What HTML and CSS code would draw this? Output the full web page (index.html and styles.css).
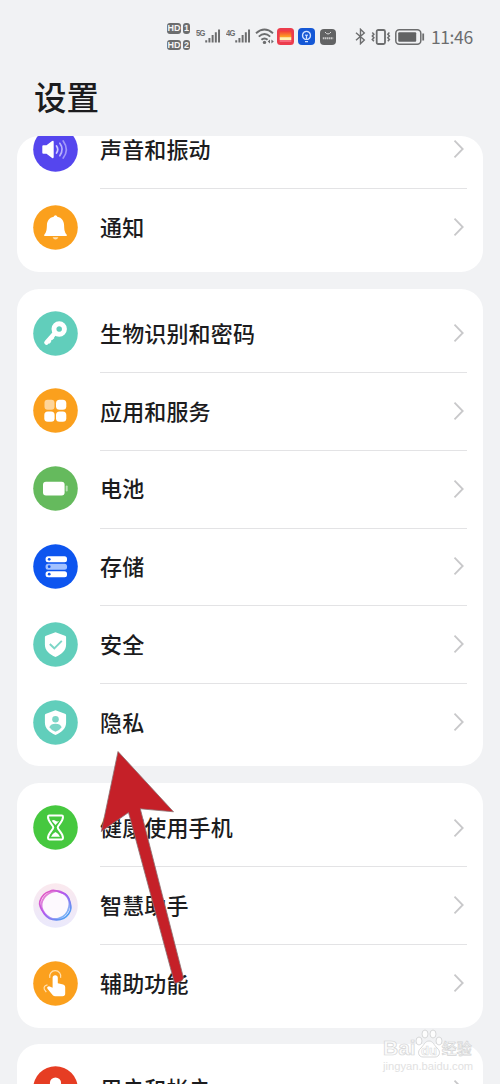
FILE: index.html
```html
<!DOCTYPE html>
<html lang="zh-CN">
<head>
<meta charset="utf-8">
<title>设置</title>
<link rel="stylesheet" href="styles.css">
</head>
<body>
<svg class="defs" aria-hidden="true">
  <defs>
    <symbol id="chev" viewBox="0 0 12 20"><path d="M1.5 1.600 9.700 10 1.5 18.400" fill="none" stroke="#c8c8ca" stroke-width="1.8"/></symbol>
    <symbol id="bars" viewBox="0 0 17 16"><path d="M1.3 12.5V15M4.7 10V15M8.1 7V15M11.5 4V15M14.9 1V15" stroke="#6c6d6e" stroke-width="2.1"/></symbol>
    <linearGradient id="sun" x1="0" y1="0" x2="0" y2="1"><stop offset="0" stop-color="#f33a3a"/><stop offset="1" stop-color="#ffb020"/></linearGradient>
    <linearGradient id="ring" x1="0" y1="0" x2="1" y2="1"><stop offset="0" stop-color="#f45bb5"/><stop offset=".45" stop-color="#b157ef"/><stop offset="1" stop-color="#37b6f5"/></linearGradient>
    <linearGradient id="halo" x1="0" y1="0" x2="0" y2="1"><stop offset="0" stop-color="#fbe9ee"/><stop offset="1" stop-color="#eae9fc"/></linearGradient>
  </defs>
</svg>
<div class="screen">
  <header class="status">
    <div class="sims">
      <div class="sim"><span class="hd">HD</span><span class="num">1</span></div>
      <div class="sim"><span class="hd">HD</span><span class="num">2</span></div>
    </div>
    <div class="signal first"><span class="net">5G</span><svg class="bars"><use href="#bars"/></svg></div>
    <div class="signal second"><span class="net">4G</span><svg class="bars"><use href="#bars"/></svg></div>
    <svg class="wifi" viewBox="0 0 20 17"><g fill="none" stroke="#6c6d6e" stroke-width="1.9"><path d="M1 5.2Q9.5-2.2 18 5.2M3.8 8.6Q9.5 3.6 15.2 8.6M6.4 11.8Q9.5 9 12.6 11.8"/></g><circle cx="9.5" cy="14.4" r="1.7" fill="#6c6d6e"/><path d="M12.7 13.5 15 11.4V15.6ZM18.8 13.5 16.4 11.4V15.6Z" fill="#6c6d6e"/></svg>
    <svg class="app red" viewBox="0 0 17 17"><rect width="17" height="17" rx="3.5" fill="#ec3c4c"/><rect x="2.7" y="3" width="11.6" height="6.5" fill="url(#sun)"/><rect x="2.7" y="9.2" width="11.6" height="2.8" fill="#fff3b0"/><rect x="2.7" y="12" width="11.6" height="2" fill="#f7687a"/></svg>
    <svg class="app blue" viewBox="0 0 17 17"><rect width="17" height="17" rx="4" fill="#1558d6"/><g fill="none" stroke="#cfe0ff" stroke-width="1.3"><path d="M6.8 11.3C3 9 4.3 3.3 8.5 3.3S14 9 10.2 11.3ZM7 13.7h3M8.5 11V7.8L7.3 6.7M8.5 7.8 9.7 6.7"/></g></svg>
    <svg class="app dark" viewBox="0 0 16 16"><rect width="16" height="16" rx="4" fill="#626364"/><path d="M5 3q3 4 6 0" fill="none" stroke="#ddd"/><path d="M2.8 9.2h10.4" stroke="#c9c9c9" stroke-width="2" stroke-dasharray="1.5 .5"/></svg>
    <svg class="bt" viewBox="0 0 11 17"><path d="M1 4.7 9.3 12 5.5 15.7V1.3L9.3 5 1 12.3" fill="none" stroke="#6c6d6e" stroke-width="1.4"/></svg>
    <svg class="vib" viewBox="0 0 20 16"><rect x="5.7" y="1" width="8.3" height="14" rx="1.5" fill="none" stroke="#6c6d6e" stroke-width="1.8"/><path d="M1.3 3.5 2.9 5.2 1.3 7 2.9 8.8 1.3 10.5 2.9 12.3M18.4 3.5 16.8 5.2 18.4 7 16.8 8.8 18.4 10.5 16.8 12.3" fill="none" stroke="#6c6d6e" stroke-width="1.5"/></svg>
    <svg class="bat" viewBox="0 0 30 16"><rect x=".8" y=".8" width="25" height="14.4" rx="3.5" fill="none" stroke="#6c6d6e" stroke-width="1.5"/><rect x="3.2" y="3.2" width="18" height="9.6" rx="1" fill="#626364"/><path d="M28.2 4.5v7" stroke="#6c6d6e" stroke-width="1.8"/></svg>
    <span class="time">11:46</span>
  </header>
  <h1 class="title">设置</h1>
  <main class="list">
    <section class="card clipped">
      <div class="row"><svg class="icon" viewBox="0 0 45 45"><circle cx="22.5" cy="22.5" r="22.3" fill="#5546ee"/><path d="M9.3 19.3q0-1 1-1h3.2l5.6-4.2q1.6-1 1.6.8v15.2q0 1.8-1.6.8l-5.6-4.2h-3.2q-1 0-1-1z" fill="#fff"/><g fill="none" stroke-width="1.7" stroke-linecap="round"><path d="M23.5 19q2.5 3.5 0 7" stroke="#cfcaff"/><path d="M26.8 16.3q4.6 6.2 0 12.4" stroke="#b8b1fb"/><path d="M30.2 13.9q6.2 8.6 0 17.2" stroke="#a198f8"/></g></svg><div class="cell"><span>声音和振动</span><svg class="chev"><use href="#chev"/></svg></div></div>
      <div class="row"><svg class="icon" viewBox="0 0 45 45"><circle cx="22.5" cy="22.5" r="22.3" fill="#fba01d"/><path d="M22.5 10.2q1.5 0 1.8 1.6c4.6.9 6.6 4.2 6.8 8.4.1 5.2.7 7.2 2.5 9.2q1 1.6-.6 1.6H12q-1.600 0-.6-1.6c1.800-2 2.400-4 2.500-9.200.2-4.200 2.200-7.500 6.800-8.400q.3-1.600 1.800-1.600z" fill="#fff"/><path d="M19.600 32.200h5.800q-1 2.300-2.900 2.300t-2.900-2.300z" fill="#ffe0b0"/></svg><div class="cell"><span>通知</span><svg class="chev"><use href="#chev"/></svg></div></div>
    </section>
    <section class="card">
      <div class="row"><svg class="icon" viewBox="0 0 45 45"><circle cx="22.500" cy="22.500" r="22.300" fill="#61cebb"/><path d="M21.500 22.500 13.500 31.500" stroke="#fff" stroke-width="4.600" stroke-linecap="round"/><path d="M15 29.500 17.300 31.800M18.500 26 20.300 28" stroke="#fff" stroke-width="3"/><circle cx="26.200" cy="18" r="5.200" fill="#9fe2d7" stroke="#fff" stroke-width="5"/><circle cx="26.200" cy="18" r="2.600" fill="#61cebb"/></svg><div class="cell"><span>生物识别和密码</span><svg class="chev"><use href="#chev"/></svg></div></div>
      <div class="row"><svg class="icon" viewBox="0 0 45 45"><circle cx="22.500" cy="22.500" r="22.300" fill="#fba01d"/><rect x="11.500" y="11.700" width="10" height="10" rx="3" fill="#fed59a"/><g fill="#fff"><rect x="23" y="11.700" width="10.300" height="10" rx="3.500"/><rect x="11.300" y="23.500" width="10.300" height="10.200" rx="3.500"/><rect x="23" y="23.500" width="10.300" height="10.200" rx="3.500"/></g></svg><div class="cell"><span>应用和服务</span><svg class="chev"><use href="#chev"/></svg></div></div>
      <div class="row"><svg class="icon" viewBox="0 0 45 45"><circle cx="22.500" cy="22.500" r="22.300" fill="#65ba5d"/><rect x="10" y="15.700" width="21.600" height="13.800" rx="3" fill="#fff"/><rect x="32.700" y="19.500" width="2" height="6" rx="1" fill="#b7dfb3"/></svg><div class="cell"><span>电池</span><svg class="chev"><use href="#chev"/></svg></div></div>
      <div class="row"><svg class="icon" viewBox="0 0 45 45"><circle cx="22.500" cy="22.500" r="22.300" fill="#0d55ef"/><rect x="12.600" y="12.300" width="21.400" height="6" rx="2.500" fill="#fff"/><rect x="12.600" y="19.700" width="21.400" height="6" rx="2.500" fill="#a3c2ff"/><rect x="12.600" y="27.200" width="21.400" height="6" rx="2.500" fill="#fff"/><g fill="#0d55ef"><circle cx="16.200" cy="15.300" r="1.400"/><circle cx="16.200" cy="22.700" r="1.400"/><circle cx="16.200" cy="30.200" r="1.400"/></g></svg><div class="cell"><span>存储</span><svg class="chev"><use href="#chev"/></svg></div></div>
      <div class="row"><svg class="icon" viewBox="0 0 45 45"><circle cx="22.500" cy="22.500" r="22.300" fill="#61cebb"/><path d="M22.500 10.200 32 13.700q1.100.4 1.100 1.500v7.300c0 6.200-4.600 9.900-10.600 12.500-6-2.600-10.600-6.300-10.600-12.500v-7.300q0-1.100 1.100-1.500z" fill="#fff"/><path d="M16.800 22 21.300 26.300 28.800 18.800" fill="none" stroke="#7cd6c7" stroke-width="1.900"/></svg><div class="cell"><span>安全</span><svg class="chev"><use href="#chev"/></svg></div></div>
      <div class="row"><svg class="icon" viewBox="0 0 45 45"><circle cx="22.500" cy="22.500" r="22.300" fill="#61cebb"/><path d="M22.500 10.200 32 13.700q1.100.4 1.100 1.500v7.300c0 6.200-4.600 9.900-10.600 12.500-6-2.600-10.600-6.300-10.600-12.500v-7.300q0-1.100 1.100-1.500z" fill="#fff"/><circle cx="22.500" cy="19.300" r="3.300" fill="#7cd6c7"/><path d="M16.300 27.200q1.500-3.400 6.200-3.400t6.200 3.400q-2.300 3.200-6.200 4.600-3.900-1.400-6.200-4.600z" fill="#7cd6c7"/></svg><div class="cell"><span>隐私</span><svg class="chev"><use href="#chev"/></svg></div></div>
    </section>
    <section class="card">
      <div class="row"><svg class="icon" viewBox="0 0 45 45"><circle cx="22.500" cy="22.500" r="22.300" fill="#46c83f"/><g fill="none" stroke="#fff" stroke-width="2" stroke-linejoin="round"><path d="M16.200 10.600h12.600q1.200 0 1.200 1.400c0 5-5.300 8-5.300 10.500s5.300 5.500 5.300 10.500q0 1.400-1.200 1.400H16.200q-1.200 0-1.200-1.400c0-5 5.300-8 5.300-10.500s-5.300-5.500-5.300-10.500q0-1.400 1.200-1.400z"/></g><path d="M18.700 15.800q1.900-1.400 3.800 0t3.800 0l-3.800 4.200zM18 31.800q1.300-3.200 4.500-4.700 3.200 1.500 4.500 4.700z" fill="#fff"/></svg><div class="cell"><span>健康使用手机</span><svg class="chev"><use href="#chev"/></svg></div></div>
      <div class="row"><svg class="icon" viewBox="0 0 45 45"><circle cx="22.500" cy="22.500" r="22.300" fill="url(#halo)"/><path d="M17 8.200c4-2.500 8.500.5 12.600 1.700 4.500 1.300 6.300 4.500 7.400 9.300 1.100 4.500 1.700 7.300-1.300 11.500-3.100 4.500-6.500 6.100-11.900 6.200-5.400.2-9.300-1.700-12.400-5.900-3.200-4.400-5.800-8.400-4.500-12.700C8.300 13.500 12 9.500 17 8.200z" fill="#fdf9fe" stroke="url(#ring)" stroke-width="1.700"/><path d="M19 8.900c5-2 10-.4 13.700 3.100 3.700 3.600 4.400 7.300 3.400 12-1 4.900-4.700 9.900-10 11.500-5.400 1.600-10.700-.9-14.100-4.700-3.500-4-4.600-8.200-2.700-12.900 1.700-4.200 5.200-7.300 9.700-9z" fill="none" stroke="url(#ring)" stroke-width="1.900" opacity=".75"/></svg><div class="cell"><span>智慧助手</span><svg class="chev"><use href="#chev"/></svg></div></div>
      <div class="row"><svg class="icon" viewBox="0 0 45 45"><circle cx="22.500" cy="22.500" r="22.300" fill="#fba01d"/><path d="M22.200 14.300c1.600 0 2.600 1 2.600 2.500v5.500l5.400 1.300q2 .5 2 2.500v6.400q0 2.700-2.700 2.700h-7.200q-1.500 0-2.500-1l-5.300-6.500q-1-1.200.2-2 1.300-.7 2.600.1l2.300 1V16.800c0-1.500 1-2.500 2.600-2.500z" fill="#fff"/><g fill="none" stroke="#ffe0b0" stroke-width="1.200"><path d="M16.800 16.800a5.600 5.600 0 1 1 10.800 0"/><path d="M14.500 23.800q-4.200 1-3.200 4.500l2 2.800"/></g></svg><div class="cell"><span>辅助功能</span><svg class="chev"><use href="#chev"/></svg></div></div>
    </section>
    <section class="card">
      <div class="row"><svg class="icon" viewBox="0 0 45 45"><circle cx="22.500" cy="22.500" r="22.300" fill="#e63d23"/><circle cx="22.500" cy="17" r="5.600" fill="#fff"/><path d="M11 32q3-8 11.500-8T34 32z" fill="#fff"/></svg><div class="cell"><span>用户和帐户</span><svg class="chev"><use href="#chev"/></svg></div></div>
    </section>
  </main>
  <svg class="arrow" viewBox="0 0 76 238"><path d="M18 1.500 73.500 61.800 40.300 58.800 83.500 228Q83 231 78 232.500T74.500 233L28.500 62.500 1.300 81.500z" fill="#c52028" stroke="#8c7274" stroke-width=".8"/></svg>
  <div class="watermark">
    <div class="brand"><span>Bai</span><svg class="paw" viewBox="0 0 28 30"><g fill="#fff" stroke="#d5d6d7" stroke-width="1"><ellipse cx="4" cy="12" rx="3" ry="4"/><ellipse cx="10" cy="5" rx="3" ry="4"/><ellipse cx="18" cy="5" rx="3" ry="4"/><ellipse cx="24" cy="12" rx="3" ry="4"/><path d="M14 12c4 0 5 4 8 7 4 3 3 9-2 9H8c-5 0-6-6-2-9 3-3 4-7 8-7z"/></g><text x="14" y="26" text-anchor="middle" class="du">du</text></svg><span class="exp">经验</span></div>
    <div class="url">jingyan.baidu.com</div>
  </div>
</div>
</body>
</html>
```
FILE: styles.css
```css
* { box-sizing: border-box; }
body { margin: 0; background: #f1f2f4; font-family: "Noto Sans CJK SC", sans-serif; color: #1c1c1e; }
.defs { position: absolute; width: 0; height: 0; }
.screen { position: relative; width: 500px; height: 1084px; overflow: hidden; display: flex; flex-direction: column; }
.status { height: 73px; flex: none; display: flex; align-items: center; padding-left: 167px; color: #6c6d6e; }
.status > * { flex: none; }
.sims { display: flex; flex-direction: column; gap: 6px; width: 24px; }
.sim { display: flex; gap: 2px; }
.hd, .num { height: 10.500px; background: #6c6d6e; color: #f5f5f5; border-radius: 3px; font: bold 9px/10.500px "Liberation Sans", sans-serif; text-align: center; }
.hd { width: 14px; }
.num { width: 7px; }
.signal { display: flex; width: 25px; height: 17px; }
.first { margin-left: 5px; }
.second { margin-left: 5px; }
.net { width: 9px; font: bold 9.500px/9px "Liberation Sans", sans-serif; letter-spacing: -.8px; transform: scaleX(.8); transform-origin: left; }
.bars { width: 17px; height: 16px; }
.wifi { width: 20px; height: 17px; margin-left: 4px; }
.app { width: 17px; height: 17px; }
.red { margin-left: 2px; }
.blue { margin-left: 4px; }
.dark { width: 16px; height: 16px; margin-left: 5px; }
.bt { width: 11px; height: 17px; margin-left: 19px; }
.vib { width: 20px; height: 16px; margin-left: 5px; }
.bat { width: 30px; height: 16px; margin-left: 4px; }
.time { margin-left: 6px; font: 17.500px/22px "Noto Sans CJK SC", sans-serif; letter-spacing: -.4px; }
.title { flex: none; margin: 0; height: 63px; padding-left: 34px; font-size: 32.500px; line-height: 45px; font-weight: 500; }
.list { flex: 1; min-height: 0; overflow: hidden; padding: 0 17px; display: flex; flex-direction: column; gap: 16.700px; }
.card { flex: none; background: #fff; border-radius: 22px; padding: 5.500px 16px; overflow: hidden; }
.clipped { padding-top: 0; padding-bottom: 6px; height: 136px; display: flex; flex-direction: column; justify-content: flex-end; }
.row { flex: none; height: 77.800px; display: flex; align-items: center; }
.icon { width: 45px; height: 45px; flex: none; }
.cell { flex: 1; align-self: stretch; margin-left: 22px; display: flex; align-items: center; justify-content: space-between; font-size: 22px; letter-spacing: .15px; font-weight: 500; line-height: 32px; }
.cell span { padding-bottom: 2.400px; }
.row:not(:last-child) .cell { box-shadow: 0 1px #e3e3e5; }
.chev { width: 12px; height: 20px; margin-right: 2px; }
.arrow { position: absolute; left: 100px; top: 750px; width: 76px; height: 238px; overflow: visible; pointer-events: none; }
.watermark { position: absolute; left: 383px; top: 1030px; width: 94px; opacity: .9; }
.brand { display: flex; align-items: flex-end; height: 29px; font: bold 21px/22px "Liberation Sans", sans-serif; color: #fbfbfb; -webkit-text-stroke: .7px #d0d1d2; }
.paw { width: 28px; height: 30px; margin-left: -1px; }
.du { font: bold 13px "Liberation Sans", sans-serif; fill: #fff; stroke: #d5d6d7; stroke-width: .6px; -webkit-text-stroke: 0; }
.exp { font: 500 15px/22px "Noto Sans CJK SC", sans-serif; margin-left: -1px; }
.url { font: 11.200px/14px "Liberation Sans", sans-serif; color: #dedede; }
```
